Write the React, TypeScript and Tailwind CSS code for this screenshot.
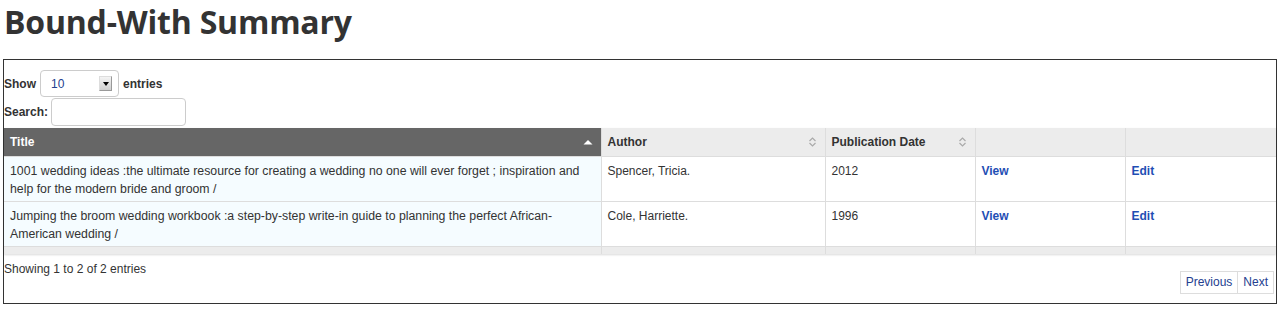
import React from "react";

type Row = {
  title: string;
  author: string;
  date: string;
};

const rows: Row[] = [
  {
    title:
      "1001 wedding ideas :the ultimate resource for creating a wedding no one will ever forget ; inspiration and help for the modern bride and groom /",
    author: "Spencer, Tricia.",
    date: "2012",
  },
  {
    title:
      "Jumping the broom wedding workbook :a step-by-step write-in guide to planning the perfect African-American wedding /",
    author: "Cole, Harriette.",
    date: "1996",
  },
];

function SortBoth() {
  return (
    <svg width="9" height="12" viewBox="0 0 9 12" className="shrink-0">
      <path d="M1.5 5 L4.5 2 L7.5 5" fill="none" stroke="#aaa" strokeWidth="1.2" />
      <path d="M1.5 7 L4.5 10 L7.5 7" fill="none" stroke="#aaa" strokeWidth="1.2" />
    </svg>
  );
}

function SortUp() {
  return (
    <svg width="10" height="6" viewBox="0 0 10 6" className="shrink-0">
      <path d="M0.5 5.5 L5 1 L9.5 5.5 Z" fill="#fff" />
    </svg>
  );
}

export default function App() {
  return (
    <div className="bg-white text-[#333] font-['Liberation_Sans',Arial,sans-serif] w-[1282px] h-[314px] overflow-hidden">
      <h1 className="font-['Open_Sans',sans-serif] font-bold text-[32px] leading-[44px] tracking-[-0.2px] pl-[4px] text-[#333]">
        Bound-With Summary
      </h1>

      <div className="mt-[15px] ml-[3px] w-[1274px] border border-[#333] pt-[10px] pb-[9px]">
        <div className="flex items-center gap-[4px] text-[12px] font-bold h-[27px]">
          <span>Show</span>
          <div className="w-[79px] h-[27px] border border-[#ccc] rounded-[4px] flex items-center justify-between pl-[10px] pr-[6px]">
            <span className="font-normal text-[#23408f] text-[12px]">10</span>
            <span className="w-[13px] h-[15px] bg-gradient-to-b from-[#f4f4f4] to-[#cfcfcf] border border-[#999] border-t-[#ddd] border-l-[#ddd] flex items-center justify-center">
              <svg width="6" height="4" viewBox="0 0 6 4">
                <path d="M0 0 L6 0 L3 4 Z" fill="#000" />
              </svg>
            </span>
          </div>
          <span>entries</span>
        </div>
        <div className="flex items-center gap-[3px] text-[12px] font-bold h-[28px] mt-[1px]">
          <span>Search:</span>
          <div className="w-[135px] h-[28px] border border-[#ccc] rounded-[4px] bg-white" />
        </div>

        <div className="mt-[2px] shadow-[0_1px_2px_rgba(0,0,0,0.15)]">
          <table className="w-full border-collapse text-[12px] table-fixed">
            <colgroup>
              <col className="w-[597px]" />
              <col className="w-[224px]" />
              <col className="w-[150px]" />
              <col className="w-[150px]" />
              <col />
            </colgroup>
            <thead>
              <tr className="h-[28px] font-bold">
                <th className="bg-[#666] text-white text-left px-[6px] border-b border-[#ddd]">
                  <div className="flex items-center justify-between pr-[2px]">
                    <span>Title</span>
                    <SortUp />
                  </div>
                </th>
                <th className="bg-[#ececec] text-left px-[6px] border-l border-b border-[#ddd]">
                  <div className="flex items-center justify-between pr-[2px]">
                    <span>Author</span>
                    <SortBoth />
                  </div>
                </th>
                <th className="bg-[#ececec] text-left px-[6px] border-l border-b border-[#ddd]">
                  <div className="flex items-center justify-between pr-[2px]">
                    <span>Publication Date</span>
                    <SortBoth />
                  </div>
                </th>
                <th className="bg-[#ececec] border-l border-b border-[#ddd]" />
                <th className="bg-[#ececec] border-l border-b border-[#ddd]" />
              </tr>
            </thead>
            <tbody>
              {rows.map((r) => (
                <tr key={r.title} className="h-[45px] align-top border-b border-[#ddd]">
                  <td className="bg-[#f5fcff] px-[6px] pt-[5px] leading-[18px] text-[12.3px]">{r.title}</td>
                  <td className="px-[6px] pt-[5px] leading-[18px] border-l border-[#ddd]">{r.author}</td>
                  <td className="px-[6px] pt-[5px] leading-[18px] border-l border-[#ddd]">{r.date}</td>
                  <td className="px-[6px] pt-[5px] leading-[18px] border-l border-[#ddd]">
                    <a className="font-bold text-[#1f4eb4]">View</a>
                  </td>
                  <td className="px-[6px] pt-[5px] leading-[18px] border-l border-[#ddd]">
                    <a className="font-bold text-[#1f4eb4]">Edit</a>
                  </td>
                </tr>
              ))}
            </tbody>
            <tfoot>
              <tr className="h-[8px] bg-[#ececec]">
                <td />
                <td className="border-l border-[#ddd]" />
                <td className="border-l border-[#ddd]" />
                <td className="border-l border-[#ddd]" />
                <td className="border-l border-[#ddd]" />
              </tr>
            </tfoot>
          </table>
        </div>

        <div className="flex justify-between items-start text-[12px] mt-[8px]">
          <span className="leading-[15px]">Showing 1 to 2 of 2 entries</span>
          <div className="flex mt-[9px] mr-[2px] border border-[#ddd] text-[#23408f]">
            <span className="px-[5px] h-[21px] leading-[21px]">Previous</span>
            <span className="px-[5px] h-[21px] leading-[21px] border-l border-[#ddd]">Next</span>
          </div>
        </div>
      </div>
    </div>
  );
}
